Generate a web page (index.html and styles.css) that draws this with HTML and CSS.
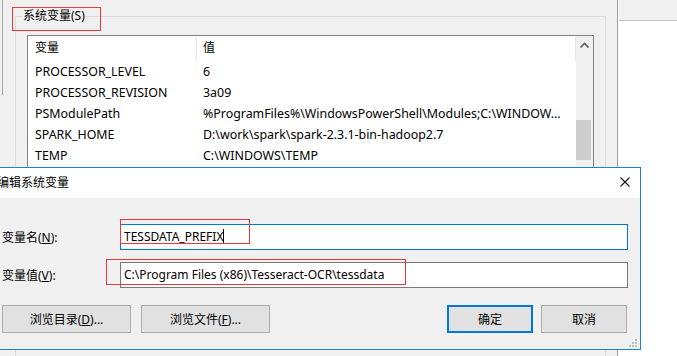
FILE: index.html
```html
<!DOCTYPE html>
<html lang="zh-CN">
<head>
  <meta charset="UTF-8">
  <meta name="viewport" content="width=device-width, initial-scale=1.0">
  <title>编辑系统变量</title>
  <link rel="stylesheet" href="styles.css">
</head>

<body>

<div class="desk">

  <!-- window behind, top right corner -->
  <div class="back-strip"></div>

  <!-- Environment variables window -->
  <div class="env-window">
    <div class="edge-line"></div>

    <fieldset class="group">
      <legend>系统变量(S)</legend>

      <div class="listview">
        <div class="lv-table">
          <div class="lv-row lv-head">
            <span class="c1">变量</span>
            <span class="c2">值</span>
          </div>
          <div class="lv-row"><span class="c1">PROCESSOR_LEVEL</span><span class="c2">6</span></div>
          <div class="lv-row"><span class="c1">PROCESSOR_REVISION</span><span class="c2">3a09</span></div>
          <div class="lv-row"><span class="c1">PSModulePath</span><span class="c2">%ProgramFiles%\WindowsPowerShell\Modules;C:\WINDOW...</span></div>
          <div class="lv-row"><span class="c1">SPARK_HOME</span><span class="c2">D:\work\spark\spark-2.3.1-bin-hadoop2.7</span></div>
          <div class="lv-row"><span class="c1">TEMP</span><span class="c2">C:\WINDOWS\TEMP</span></div>
        </div>
        <div class="vscroll">
          <span class="sb-arrow">
            <svg width="9" height="6" viewBox="0 0 9 6"><path d="M0.5 5.5 L4.5 1.5 L8.5 5.5" fill="none" stroke="#606060" stroke-width="1.6"/></svg>
          </span>
          <span class="sb-thumb"></span>
        </div>
      </div>
    </fieldset>
  </div>

  <!-- red annotation boxes -->
  <div class="mark mark-group"></div>

  <!-- Edit system variable dialog -->
  <div class="dialog">
    <div class="titlebar">
      <span class="title">编辑系统变量</span>
      <svg class="close" width="10" height="10" viewBox="0 0 10 10"><path d="M0.5 0.5 L9.5 9.5 M9.5 0.5 L0.5 9.5" stroke="#111" stroke-width="1.1"/></svg>
    </div>

    <div class="dialog-body">
      <div class="field">
        <label for="varName">变量名(<u>N</u>):</label>
        <div class="input focused" id="varName">TESSDATA_PREFIX<span class="caret"></span></div>
      </div>
      <div class="field">
        <label for="varValue">变量值(<u>V</u>):</label>
        <div class="input" id="varValue">C:\Program Files (x86)\Tesseract-OCR\tessdata</div>
      </div>

      <div class="buttons">
        <button class="btn wide">浏览目录(<u>D</u>)...</button>
        <button class="btn wide">浏览文件(<u>F</u>)...</button>
        <span class="spacer"></span>
        <button class="btn default">确定</button>
        <button class="btn">取消</button>
      </div>
    </div>

    <span class="grip">
      <svg width="9" height="9" viewBox="0 0 9 9" fill="#bdbdbd">
        <rect x="6" y="0" width="2" height="2"/>
        <rect x="3" y="3" width="2" height="2"/><rect x="6" y="3" width="2" height="2"/>
        <rect x="0" y="6" width="2" height="2"/><rect x="3" y="6" width="2" height="2"/><rect x="6" y="6" width="2" height="2"/>
      </svg>
    </span>
  </div>

  <div class="mark mark-name"></div>
  <div class="mark mark-value"></div>

</div>

</body>
</html>
```

FILE: styles.css
```css
body {
  margin: 0;
  background-color: #fff;
  font-family: "Noto Sans", "Noto Sans CJK SC", sans-serif;
  font-size: 12px;
  color: #000;
}

.desk {
  position: relative;
  width: 677px;
  height: 356px;
  overflow: hidden;
  background-color: #fff;
}

.back-strip {
  position: absolute;
  left: 619px;
  top: 0;
  width: 58px;
  height: 20px;
  background-color: #f0f0f0;
  border-bottom: 1px solid #c6c6c6;
}

/* Environment variables window */
.env-window {
  position: absolute;
  left: 0;
  top: 0;
  width: 618px;
  height: 356px;
  background-color: #f0f0f0;
  border-right: 1px solid #a0a0a0;
  padding: 8px 0 0 15px;
  box-sizing: border-box;
}

.edge-line {
  position: absolute;
  left: 2px;
  top: 0;
  width: 1px;
  height: 95px;
  background-color: #a8a8a8;
}

.group {
  margin: 0;
  width: 591px;
  height: 400px;
  box-sizing: border-box;
  border: 1px solid #dcdcdc;
  padding: 11px 0 0 7px;
}

.group legend {
  padding: 0;
  line-height: 16px;
}

.listview {
  display: flex;
  margin-left: 4px;
  width: 567px;
  height: 300px;
  box-sizing: border-box;
  border: 1px solid #828282;
  background-color: #fff;
}

.lv-table {
  flex: 1;
  min-width: 0;
}

.lv-row {
  display: flex;
  height: 21px;
  line-height: 21px;
  font-size: 12.4px;
  white-space: nowrap;
}

.lv-row .c1 {
  width: 169px;
  padding-left: 7px;
  box-sizing: border-box;
  flex-shrink: 0;
}

.lv-row .c2 {
  flex: 1;
  padding-left: 6px;
  overflow: hidden;
}

.lv-head {
  height: 25px;
  line-height: 22px;
  font-size: 12px;
}

.lv-head span {
  margin-top: 1px;
  height: 24px;
  border-right: 1px solid #e5e5e5;
}

.vscroll {
  width: 17px;
  display: flex;
  flex-direction: column;
  background-color: #f0f0f0;
}

.sb-arrow {
  height: 17px;
  display: flex;
  justify-content: center;
  align-items: center;
}

.sb-thumb {
  margin-top: 67px;
  width: 15px;
  height: 40px;
  background-color: #cdcdcd;
}

/* Edit dialog */
.dialog {
  position: absolute;
  left: -10px;
  top: 167px;
  width: 651px;
  height: 183px;
  box-sizing: border-box;
  border: 1px solid #1883d7;
  background-color: #f0f0f0;
}

.titlebar {
  height: 30px;
  background-color: #fff;
  display: flex;
  align-items: center;
  justify-content: space-between;
  padding: 0 10px 0 6px;
}

.title {
  line-height: 30px;
}

.close {
  margin-top: -2px;
}

.dialog-body {
  padding: 26px 12px 0 11px;
}

.field {
  display: grid;
  grid-template-columns: 118px 1fr;
  align-items: center;
  margin-bottom: 12px;
}

.input {
  height: 26px;
  box-sizing: border-box;
  border: 1px solid #7a7a7a;
  background-color: #fff;
  padding-left: 3px;
  line-height: 24px;
  white-space: nowrap;
}

.input.focused {
  border-color: #0078d7;
}

.caret {
  display: inline-block;
  width: 1px;
  height: 15px;
  background-color: #000;
  vertical-align: -3px;
}

.buttons {
  display: flex;
  margin-top: 17px;
  margin-right: 1px;
}

.btn {
  width: 86px;
  height: 28px;
  margin-left: 8px;
  background-color: #e1e1e1;
  border: 1px solid #adadad;
  font-family: inherit;
  font-size: 12px;
  color: #000;
  padding: 0;
}

.btn.wide {
  width: 129px;
  margin-left: 0;
  margin-right: 10px;
}

.btn.default {
  border: 2px solid #0078d7;
}

.spacer {
  flex: 1;
}

.grip {
  position: absolute;
  right: 2px;
  bottom: 1px;
  line-height: 0;
}

/* red annotation boxes */
.mark {
  position: absolute;
  border: 1px solid #e8383d;
  box-sizing: border-box;
}

.mark-group {
  left: 12px;
  top: 7px;
  width: 89px;
  height: 24px;
}

.mark-name {
  left: 120px;
  top: 219px;
  width: 130px;
  height: 25px;
}

.mark-value {
  left: 106px;
  top: 259px;
  width: 300px;
  height: 26px;
}
```
